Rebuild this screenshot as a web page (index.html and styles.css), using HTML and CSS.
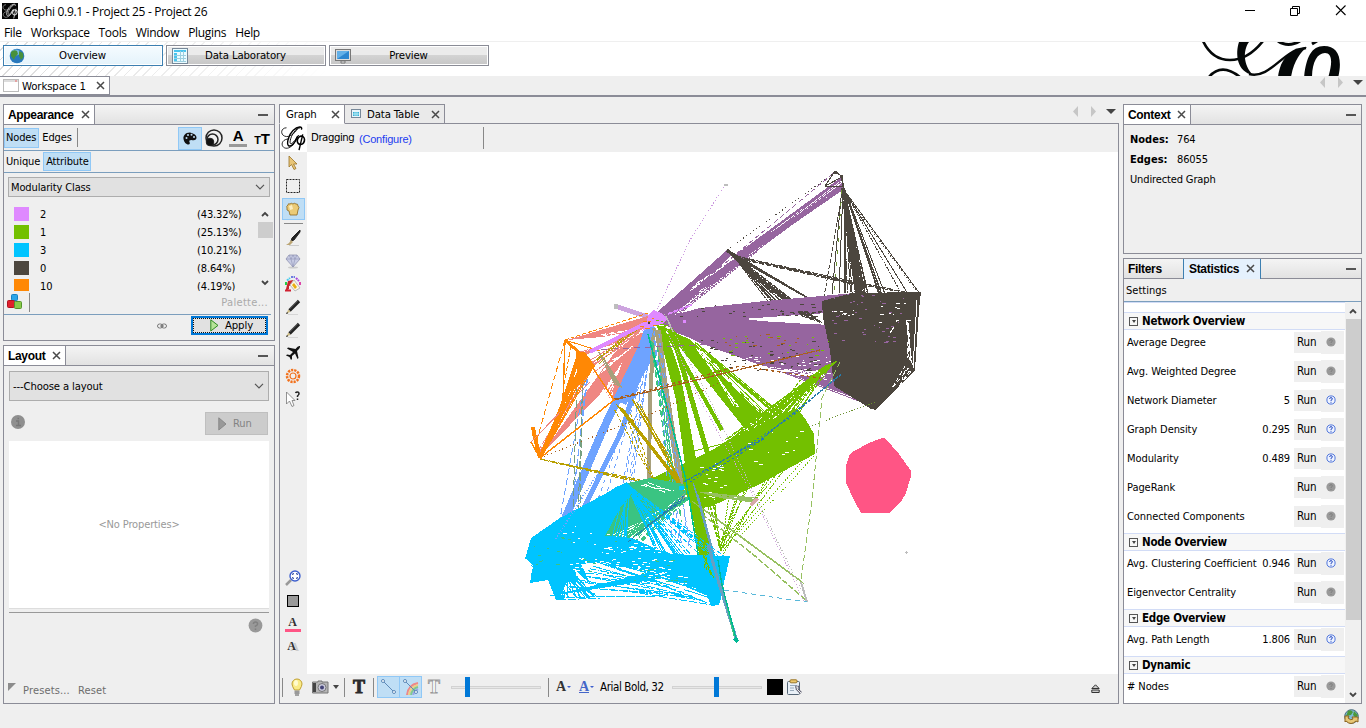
FILE: index.html
```
<!DOCTYPE html>
<html lang="en">
<head>
<meta charset="utf-8">
<title>Gephi 0.9.1 - Project 25 - Project 26</title>
<link rel="stylesheet" href="styles.css">
</head>
<body>
<svg class="defs" width="0" height="0">
  <symbol id="x" viewBox="0 0 9 9"><path d="M1 1L8 8M8 1L1 8" stroke="#4a4a4a" stroke-width="1.5" fill="none"/></symbol>
  <symbol id="chev" viewBox="0 0 10 6"><path d="M1 .8L5 4.8L9 .8" stroke="#555" stroke-width="1.2" fill="none"/></symbol>
  <symbol id="gray-help" viewBox="0 0 10 10"><circle cx="5" cy="5" r="4.6" fill="#999"/><path d="M3.6 4Q3.7 2.6 5 2.6T6.4 4Q6.3 4.8 5 5.4V6M5 7V8" stroke="#808080" fill="none"/></symbol>
  <symbol id="blue-help" viewBox="0 0 10 10"><circle cx="5" cy="5" r="4.1" fill="#eef3ff" stroke="#4f75dc"/><path d="M3.6 4Q3.7 2.6 5 2.6T6.4 4Q6.3 4.8 5 5.2V6M5 6.8V7.8" stroke="#2c50c4" fill="none"/></symbol>
  <symbol id="pencil" viewBox="0 0 16 16"><path d="M3 15.500H13" stroke="#d5d5d5"/><path d="M4.500 11.500L14 2" stroke="#222" stroke-width="3.2"/><path d="M4.500 10L12.500 2" stroke="#777" stroke-width=".8"/><path d="M1.500 14.500L3.2 10.500L5.600 12.800Z" fill="#cdbb83"/><path d="M1 15L2 13L3.200 14.200Z" fill="#111"/></symbol>
  <symbol id="gephi" viewBox="0 0 28 28"><g fill="none" stroke="currentColor"><path d="M7 3C1 3 0 10 5 12S16 9 19 4" stroke-width=".9"/><path d="M23 5C25 1 19 1 14 6S7 20 9 22S16 21 19 12" stroke-width="1.5"/><path d="M22 3C17 3 12 11 11 17S14 20 20 11" stroke-width="1"/><path d="M10 15C3 15 1 20 3 23S10 26 14 21S17 13 20 11" stroke-width=".9"/><ellipse cx="22.500" cy="16.500" rx="3.800" ry="4.500" transform="rotate(15 22.500 16.500)" stroke-width="1.8"/><path d="M24.500 10L20.500 27" stroke-width="1.5"/></g></symbol>
</svg>

<header class="titlebar">
  <svg class="app-icon" viewBox="0 0 28 28"><rect width="28" height="28" fill="#050505"/><use href="#gephi" width="28" height="28" color="#ddd"/></svg>
  <span class="title">Gephi 0.9.1 - Project 25 - Project 26</span>
  <svg class="wincontrols" width="110" height="22" fill="none" stroke="#000"><path d="M5 10.5H15M50.500 8.500H57.500V15.500H50.500ZM52.500 8V6.500H59.500V13.500H58"/><path d="M96 5.500L105.500 15M105.500 5.500L96 15" stroke-width="1.1"/></svg>
</header>
<nav class="menubar"><span>File</span><span>Workspace</span><span>Tools</span><span>Window</span><span>Plugins</span><span>Help</span></nav>

<div class="perspectives">
  <div class="persp on"><svg width="16" height="16"><circle cx="8" cy="8" r="7.300" fill="#2878bd"/><ellipse cx="6.500" cy="4.500" rx="5" ry="3" fill="#78bce2"/><path d="M2 4Q5 1 8 3L9 6L6 9L5 12L2 8ZM10 3L14 5L14.500 9L12 12L10 8Z" fill="#48913c"/></svg><span>Overview</span></div>
  <div class="persp"><svg width="16" height="16"><rect x=".5" y=".5" width="15" height="15" fill="#e9fbff" stroke="#789"/><path d="M2 2H14V4H2ZM2 5H5V14H2Z" fill="#48c4ee"/><path d="M2 7.500H14M2 10.500H14M2 13.500H14M8.500 3V14M11.500 3V14" stroke="#9ccfe0"/></svg><span>Data Laboratory</span></div>
  <div class="persp"><svg width="16" height="16"><rect x=".5" y="1.500" width="15" height="11" fill="#ddd" stroke="#777"/><rect x="2" y="3" width="12" height="8" fill="#2d86d0"/><path d="M2 11L14 3H2Z" fill="#63b0e8"/><path d="M6 13H10V15H6Z" fill="#eee" stroke="#777"/></svg><span>Preview</span></div>
  <svg class="wordmark" viewBox="1195 42 150 34" width="150" height="34" fill="none" stroke="#050808">
    <path d="M1204 41Q1213 60 1231 60T1264 41" stroke-width="2.600"/>
    <path d="M1250 74C1268 79 1281 57 1297 50L1307 48" stroke-width="2.400"/>
    <path d="M1240 42H1250C1244 50 1244 65 1254 75C1238 72 1236 54 1240 42Z" fill="#050808" stroke="none"/>
    <path d="M1308 47C1302 52 1295 60 1292 77H1279C1281 65 1285 50 1308 47Z" fill="#050808" stroke="none"/>
    <path d="M1210 77Q1223 62 1242 78" stroke-width="2.600"/>
    <path d="M1279 41Q1289 48 1301 41M1313 44L1318 41" stroke-width="3"/>
    <path d="M1305 78C1307 58 1312 46 1325 46C1339 46 1344 58 1339 78H1329C1334 62 1333 53 1326 53C1318 53 1313 63 1313 78Z" fill="#050808" stroke="none"/>
  </svg>
</div>

<div class="wstabs">
  <div class="wstab"><svg width="16" height="14"><rect x=".5" y=".5" width="15" height="12" fill="#fff" stroke="#bbb"/><path d="M1 2H15" stroke="#ddd" stroke-width="2"/><path d="M12 2H14" stroke="#e66"/></svg><span>Workspace 1</span><svg class="x" ><use href="#x"/></svg></div>
  <svg class="navarrows" width="46" height="12"><path d="M5 0L0 5.500L5 11ZM18 0L23 5.500L18 11Z" fill="#c6c6c6"/><path d="M33 3H43L38 8Z" fill="#444"/></svg>
</div>

<main class="workspace">
  <div class="col left">
    <section class="panel appearance">
      <div class="phead"><div class="ptab"><b>Appearance</b><svg class="x"><use href="#x"/></svg></div><i class="min"></i></div>
      <div class="arow one">
        <span class="tog on">Nodes</span><span class="tog">Edges</span><i class="vsep"></i>
        <div class="aicons">
          <span class="on"><svg width="14" height="13"><path d="M7 .5C2 .5 0 4 .5 7S3 12.500 5.500 12.500Q7.500 12 6.500 10T8.500 8Q13.500 9 13.500 5.500T7 .5Z" fill="#111"/><g fill="#bfdef5"><circle cx="3.500" cy="6" r="1"/><circle cx="5" cy="3" r="1"/><circle cx="8.500" cy="2.700" r="1"/><circle cx="11" cy="5" r="1"/></g></svg></span>
          <span><svg width="18" height="18" fill="none" stroke="#222"><circle cx="9" cy="9" r="8" stroke-width="1.500"/><circle cx="7.500" cy="10.500" r="5.500" stroke-width="1.500"/><circle cx="5" cy="13" r="3.800" fill="#111"/></svg></span>
          <span class="acolor">A</span>
          <span class="tt"><small>T</small>T</span>
        </div>
      </div>
      <div class="arow two"><span class="tog">Unique</span><span class="tog on">Attribute</span></div>
      <div class="combo mod"><span>Modularity Class</span><svg width="10" height="6"><use href="#chev"/></svg></div>
      <div class="legend">
        <div class="items">
          <div><i class="c2"></i><span>2</span><em>(43.32%)</em></div>
          <div><i class="c1"></i><span>1</span><em>(25.13%)</em></div>
          <div><i class="c3"></i><span>3</span><em>(10.21%)</em></div>
          <div><i class="c0"></i><span>0</span><em>(8.64%)</em></div>
          <div><i class="c10"></i><span>10</span><em>(4.19%)</em></div>
        </div>
        <div class="lscroll"><svg class="up" width="8" height="6"><path d="M1 5L4 2L7 5" stroke="#444" stroke-width="1.800" fill="none"/></svg><i></i><svg width="8" height="6"><path d="M1 1L4 4L7 1" stroke="#444" stroke-width="1.800" fill="none"/></svg></div>
      </div>
      <div class="palette"><svg width="16" height="16"><rect x="4.500" y=".5" width="6" height="6" rx="1" fill="#2ba5e8" stroke="#1980c0"/><rect x=".5" y="6.500" width="7" height="7" rx="1" fill="#e0202c" stroke="#b01020"/><rect x="7.500" y="7.500" width="7" height="7" rx="1" fill="#8acb4a" stroke="#55952c"/></svg><i class="vsep"></i><span>Palette...</span></div>
      <div class="applyrow"><svg width="10" height="6" fill="none" stroke="#777"><rect x=".5" y="1" width="5" height="4" rx="2"/><rect x="4.500" y="1" width="5" height="4" rx="2"/><path d="M3 3H7"/></svg><div class="apply"><svg width="9" height="13"><path d="M.8 .8V12L8 6.400Z" fill="#b5e398" stroke="#2e8b20"/></svg><span>Apply</span></div></div>
    </section>

    <section class="panel layout">
      <div class="phead"><div class="ptab"><b>Layout</b><svg class="x"><use href="#x"/></svg></div><i class="min"></i></div>
      <div class="combo choose"><span>---Choose a layout</span><svg width="10" height="6"><use href="#chev"/></svg></div>
      <div class="runrow"><svg width="14" height="14"><circle cx="7" cy="7" r="7" fill="#8f8f8f"/><path d="M5 6H7.500V10.500M5 10.500H10M6.500 3.500H8" stroke="#777" stroke-width="1.500" fill="none"/></svg><div class="runbtn"><svg width="9" height="14"><path d="M.8 .8V13L8 7Z" fill="#999" stroke="#888"/></svg><span>Run</span></div></div>
      <div class="props"><span>&lt;No Properties&gt;</span></div>
      <div class="prophelp"><svg width="15" height="15"><use href="#gray-help"/></svg></div>
      <div class="presets"><svg width="8" height="8"><path d="M0 0H8L0 8Z" fill="#8c8c8c"/></svg><span>Presets...</span><span>Reset</span></div>
    </section>
  </div>

  <section class="center">
    <div class="ctabs">
      <div class="ctab act"><span>Graph</span><svg class="x"><use href="#x"/></svg></div>
      <div class="ctab"><svg width="10" height="10"><rect x=".5" y=".5" width="9" height="8" fill="#e8f6fb" stroke="#789"/><path d="M2 3H8V7H2Z" fill="#35afd6"/><path d="M2 5H8M4 3V7M6 3V7" stroke="#dff" stroke-width=".7"/></svg><span>Data Table</span><svg class="x"><use href="#x"/></svg></div>
      <div class="rest"><svg width="46" height="12"><path d="M5 0L0 5.500L5 11ZM18 0L23 5.500L18 11Z" fill="#c6c6c6"/><path d="M33 3H43L38 8Z" fill="#444"/></svg></div>
    </div>
    <div class="cbody">
      <div class="ctop"><div class="glogo"><svg width="26" height="26"><use href="#gephi"/></svg></div><span class="drag">Dragging</span><span class="conf">(Configure)</span><i class="vsep"></i></div>
      <div class="cmid">
        <div class="rail">
          <span><svg viewBox="0 0 16 16"><path d="M4 1V12L6.500 9.500L9 14.500L11 13.500L8.500 9H12Z" fill="#e8c578" stroke="#9a7528" stroke-width=".8"/></svg></span>
          <span><svg viewBox="0 0 16 16"><rect x="1.500" y="1.500" width="13" height="13" fill="none" stroke="#222" stroke-dasharray="2 1"/></svg></span>
          <span class="on"><svg viewBox="0 0 16 16"><path d="M2 7Q1 5 3 4Q3 2 5 3Q6 1.500 8 3Q9 1.500 11 3Q13 2.500 13 5Q15 6 13 9L12 14H5L4 10L2 9Z" fill="#ebcb77" stroke="#8e681e" stroke-width=".8"/><path d="M4 5L7 4L8 8L5 9Z" fill="#fbedc4"/></svg></span>
          <i class="hsep"></i>
          <span><svg viewBox="0 0 16 16"><path d="M4 15.500H14" stroke="#ccc"/><path d="M15 0L7 8L6 11L9 10L15 2Z" fill="#222" stroke="#222"/><path d="M6 10L8 12L5 15H1L4 13Z" fill="#bba574"/></svg></span>
          <span><svg viewBox="0 0 16 16"><ellipse cx="8" cy="14.500" rx="5" ry="1" fill="#ccc"/><path d="M4 2H12L15 6L8 14L1 6Z" fill="#c8cce4" stroke="#888baa" stroke-width=".7"/><path d="M1 6H15M4 2L6 6L8 14L10 6L12 2M6 6L8 2L10 6" stroke="#8d91b4" fill="none" stroke-width=".6"/></svg></span>
          <span><svg viewBox="0 0 16 16"><path d="M1 9V6" stroke="#2c4" stroke-width="2"/><path d="M2 4.500L5 2" stroke="#4ce" stroke-width="2" stroke-dasharray="2 .6"/><path d="M6 1H10" stroke="#45d" stroke-width="1.500" stroke-dasharray="2 .6"/><path d="M11 2L14 5" stroke="#a4d" stroke-width="2" stroke-dasharray="2 .6"/><path d="M15 6V9" stroke="#d4a" stroke-width="2"/><path d="M3 5L8 4L7 9L4 10V13L1 15V13Z" fill="#c9232c"/><path d="M9 4L15 12L10 15L5 9Z" fill="#fff5df" stroke="#bbb"/><path d="M9 7L12 11L10 13L7 9Z" fill="#e8ae12"/><path d="M0 14.500H6" stroke="#d02030" stroke-width="2"/></svg></span>
          <span><svg><use href="#pencil"/></svg></span>
          <span><svg><use href="#pencil"/></svg></span>
          <span><svg viewBox="0 0 16 16"><path d="M15 1Q13 .5 10.500 4L3 2.500L2 3.500L8 7L5 10L2 9.500L1 10.500L4.500 12L6 15L7 14L7 11L10 8.500L12.500 14L13.500 13L12 6Q15.500 3 15 1Z" fill="#111"/></svg></span>
          <span><svg viewBox="0 0 16 16"><circle cx="8" cy="8" r="6" fill="none" stroke="#f2711c" stroke-width="2.500" stroke-dasharray="2.200 1"/><circle cx="8" cy="8" r="3" fill="none" stroke="#f2711c" stroke-width="1.200"/></svg></span>
          <span><svg viewBox="0 0 16 16"><path d="M1.500 1V13L4.500 10L7 15.500L9 14.500L7 9.500H10Z" fill="#fff" stroke="#777" stroke-width=".8"/><path d="M10.500 2Q11 1 12.500 1T14 3Q13.500 4 12.500 5V6M12.500 7.500V9" stroke="#222" stroke-width="1.500" fill="none"/></svg></span>
          <div class="railbottom">
            <span><svg viewBox="0 0 16 16"><path d="M1 15L6 10" stroke="#999" stroke-width="2.500"/><circle cx="10" cy="6" r="5" fill="#fff" stroke="#3d5fce" stroke-width="1.400"/><path d="M7.700 5V3.700H9M11 3.700H12.300V5M12.300 7V8.300H11M9 8.300H7.700V7" stroke="#24409c" fill="none"/></svg></span>
            <span><i class="graysq"></i></span>
            <span class="la pinku">A</span>
            <span class="la shadow">A</span>
          </div>
        </div>
        <svg id="graph" class="graph" viewBox="307 152 811 522" width="811" height="522"></svg>
      </div>
      <div class="cbottom">
        <i class="vsep"></i>
        <svg class="bulb" width="12" height="18"><path d="M3.500 12Q1 8 1 6A5 5 0 0 1 11 6Q11 8 8.500 12Z" fill="#faeb88" stroke="#c0a032"/><path d="M3.500 12.500H8.500V16H3.500Z" fill="#999"/><path d="M4 17H8" stroke="#555"/><ellipse cx="5" cy="5" rx="2" ry="3" fill="#fffbd0"/></svg>
        <svg class="cam" width="17" height="14"><path d="M.5 2H6V1H10V2H16V13H.5Z" fill="#b5b5b5" stroke="#777"/><path d="M1 3H4V12H1Z" fill="#444"/><circle cx="10" cy="7.500" r="4" fill="#ccd" stroke="#777"/><circle cx="10" cy="7.500" r="2" fill="#447"/></svg>
        <svg class="dd" width="6" height="4"><path d="M0 0H6L3 4Z" fill="#444"/></svg>
        <i class="vsep s2"></i><span class="bigT">T</span><i class="vsep s3"></i>
        <span class="btn"><svg width="16" height="16"><path d="M2 2L13 13" stroke="#5d89b8"/><circle cx="2" cy="2" r="1.500" fill="#fff" stroke="#5d89b8"/><circle cx="13" cy="13" r="1.500" fill="#fff" stroke="#5d89b8"/></svg></span><span class="btn b2"><svg width="16" height="16" fill="none"><path d="M4 16Q5 6 15 4" stroke="#e88" stroke-width="2"/><path d="M6 16Q7 8 15 6" stroke="#edcf86" stroke-width="2"/><path d="M8 16Q9 10 15 8" stroke="#80c990" stroke-width="2"/><path d="M10 16Q11 12 15 10" stroke="#99a9e8" stroke-width="2"/><path d="M2 2L13 13" stroke="#5d89b8"/><circle cx="2" cy="2" r="1.500" fill="#fff" stroke="#5d89b8"/><circle cx="13" cy="13" r="1.500" fill="#fff" stroke="#5d89b8"/></svg></span>
        <span class="bigT outl">T</span>
        <div class="slider"><i></i></div><i class="vsep s4"></i>
        <span class="la fa">A<i></i></span><span class="la fa blue">A<i></i></span>
        <span class="font">Arial Bold, 32</span><div class="slider sl2"><i></i></div><i class="blacksq"></i>
        <svg class="clip" width="17" height="16"><rect x="1.500" y="2.500" width="12" height="13" rx="1" fill="#e9f0f7" stroke="#567"/><rect x="4" y=".8" width="7" height="3" rx="1" fill="#ecc76a" stroke="#9a7528"/><path d="M4 6.500H11M4 9H8M4 11.500H8" stroke="#9ab"/><path d="M9 8L12 8L11 10L15 14" stroke="#667" stroke-width="2.500" fill="none"/><path d="M9.500 8L12 8L11 10L15 14" stroke="#eee" fill="none"/></svg>
        <svg class="eject" width="9" height="9"><path d="M4.500 .8L8.200 4.500H.8ZM.8 6V8.500H8.200V6Z" fill="#ccc" stroke="#333"/></svg>
      </div>
    </div>
  </section>

  <div class="col right">
    <section class="panel context">
      <div class="phead"><div class="ptab"><b>Context</b><svg class="x"><use href="#x"/></svg></div><i class="min"></i></div>
      <p><b>Nodes:</b><span>764</span></p><p><b>Edges:</b><span>86055</span></p><p>Undirected Graph</p>
    </section>
    <section class="panel stats">
      <div class="phead"><div class="ptab off"><b>Filters</b></div><div class="ptab sel"><b>Statistics</b><svg class="x"><use href="#x"/></svg></div><i class="min"></i></div>
      <div class="settings">Settings</div>
      <div class="sbody">
        <div class="slist">
          <h4><i></i>Network Overview</h4>
          <div class="st"><span>Average Degree</span><em></em><b>Run</b><u><svg><use href="#gray-help"/></svg></u></div>
          <div class="st"><span>Avg. Weighted Degree</span><em></em><b>Run</b><u><svg><use href="#gray-help"/></svg></u></div>
          <div class="st"><span>Network Diameter</span><em>5</em><b>Run</b><u><svg><use href="#blue-help"/></svg></u></div>
          <div class="st"><span>Graph Density</span><em>0.295</em><b>Run</b><u><svg><use href="#blue-help"/></svg></u></div>
          <div class="st"><span>Modularity</span><em>0.489</em><b>Run</b><u><svg><use href="#blue-help"/></svg></u></div>
          <div class="st"><span>PageRank</span><em></em><b>Run</b><u><svg><use href="#gray-help"/></svg></u></div>
          <div class="st"><span>Connected Components</span><em></em><b>Run</b><u><svg><use href="#gray-help"/></svg></u></div>
          <h4><i></i>Node Overview</h4>
          <div class="st"><span>Avg. Clustering Coefficient</span><em>0.946</em><b>Run</b><u><svg><use href="#blue-help"/></svg></u></div>
          <div class="st"><span>Eigenvector Centrality</span><em></em><b>Run</b><u><svg><use href="#gray-help"/></svg></u></div>
          <h4><i></i>Edge Overview</h4>
          <div class="st"><span>Avg. Path Length</span><em>1.806</em><b>Run</b><u><svg><use href="#blue-help"/></svg></u></div>
          <h4><i></i>Dynamic</h4>
          <div class="st"><span># Nodes</span><em></em><b>Run</b><u><svg><use href="#gray-help"/></svg></u></div>
        </div>
        <div class="sscroll"><svg width="8" height="6"><path d="M1 5L4 2L7 5" stroke="#444" stroke-width="1.800" fill="none"/></svg><i></i><svg class="dn" width="8" height="6"><path d="M1 1L4 4L7 1" stroke="#444" stroke-width="1.800" fill="none"/></svg></div>
      </div>
    </section>
  </div>
</main>
<footer class="status"><svg width="16" height="16"><circle cx="7.500" cy="7.500" r="6.800" fill="#7dbbd8" stroke="#467"/><path d="M4 2Q7 0 9 3L7 6L2 7ZM10 2L14 6L12 9L9 6Z" fill="#4b9a3c"/><path d="M1 7H5L4 9Q7 12 9 10L8 8H14L14 13L12 12Q7 17 2 12L1 13Z" fill="#e7c776" stroke="#8c6420"/></svg></footer>
<script src="graph.js"></script>
</body>
</html>
```

FILE: styles.css
```
* { box-sizing: border-box; }
body { margin: 0; width: 1366px; height: 728px; overflow: hidden; background: #efefef; color: #000;
  font: 11px "DejaVu Sans Condensed", "DejaVu Sans", sans-serif; font-stretch: condensed; letter-spacing: -0.13px;
  display: flex; flex-direction: column; white-space: nowrap; }
svg { display: block; flex: none; }
i, em { font-style: normal; }
.defs { position: absolute; }
.x { width: 9px; height: 9px; }
.vsep { width: 1px; background: #888; flex: none; }

.titlebar { height: 22px; background: #fff; display: flex; align-items: center; padding-left: 2px; flex: none; }
.app-icon { width: 16px; height: 16px; }
.title { font: 12px "Open Sans", sans-serif; letter-spacing: -0.3px; margin: 1px 0 0 5px; }
.wincontrols { margin-left: auto; margin-right: 16px; }
.menubar { height: 20px; background: #fff; border-bottom: 1px solid #efefef; display: flex; align-items: center; gap: 9px; padding: 2px 0 0 4px; font: 12px "Open Sans", sans-serif; letter-spacing: -0.32px; flex: none; }
.perspectives { height: 34px; flex: none; background: #fff; display: flex; gap: 3px; padding: 3px 22px 0 3px; position: relative; }
.perspectives::before { content: ""; position: absolute; left: 0; top: 0; width: 330px; height: 34px;
  background: linear-gradient(90deg, transparent, #fff), repeating-linear-gradient(135deg, #fff 0 5.6px, #dcdcdc 5.6px 6.6px); }
.persp { position: relative; width: 160px; height: 21px; border: 1px solid #8a8c96; outline: 1px solid #fff; outline-offset: -2px; background: linear-gradient(#ebebeb 0 45%, #d3d3d3 50%, #c6c6c6); display: flex; align-items: center; padding-left: 5px; font-size: 11.300px; }
.persp.on { border-color: #3c7fb1; background: linear-gradient(#f5fbff, #e4f3fb); }
.persp span { flex: 1; text-align: center; padding: 0 22px 1px 0; }
.wordmark { margin: -3px 0 0 auto; }
.wstabs { height: 21px; flex: none; border-bottom: 2px solid #8b8c97; display: flex; }
.wstab { width: 110px; height: 19px; border: 1px solid #8b8c97; border-left: 0; background: #fff; display: flex; align-items: center; padding-left: 3px; font-size: 11.300px; }
.wstab span { margin-left: 3px; width: 74px; padding-top: 1px; }
.navarrows { margin: 1px 0 0 auto; }

.workspace { display: flex; gap: 4px; padding: 7px 4px 0 3px; height: 607px; flex: none; }
.col { display: flex; flex-direction: column; gap: 4px; }
.left { width: 272px; }
.right { width: 239px; }
.panel { border: 1px solid #8b8c97; display: flex; flex-direction: column; overflow: hidden; }
.phead { height: 20px; flex: none; border-bottom: 1px solid #8b8c97; background: linear-gradient(#f4f4f4, #e2e2e2); display: flex; align-items: center; padding-right: 6px; }
.ptab { height: 19px; background: #fff; border-right: 1px solid #8b8c97; display: flex; align-items: center; gap: 7px; padding: 0 4px; font-size: 12px; }
.ptab b { font: bold 12px "Liberation Sans", Arial, sans-serif; letter-spacing: -0.32px; }
.min { width: 10px; height: 2px; background: #555; margin-left: auto; }
.right .min { margin-right: -1px; }
.appearance { height: 237px; }
.layout { height: 359px; }
.arow { display: flex; border-bottom: 1px solid #7b9ebd; flex: none; align-items: center; }
.one { height: 26px; }
.two { height: 22px; }
.tog { padding: 2px 1px 2px 2px; border: 1px solid transparent; height: 20px; line-height: 14px; }
.tog.on { background: #bfdef5; border-color: #90c8f6; }
.one .tog { margin-top: 1px; }
.one .tog:first-child { padding: 2px 2px 2px 1px; }
.one .vsep { height: 19px; margin-left: 3px; }
.two .tog:first-child { padding-right: 2px; padding-left: 1px; }
.two .tog.on { height: 19px; }
.aicons { display: flex; margin: 1px 0 0 auto; }
.aicons > span { width: 24px; height: 23px; display: flex; align-items: center; justify-content: center; font: bold 15px "Liberation Sans", sans-serif; }
.aicons .on { background: #bfdef5; border: 1px solid #90c8f6; }
.aicons .acolor { height: 19px; width: 18px; margin: 0 3px; border-bottom: 3px solid #999; line-height: 15px; margin-top: 1px; }
.tt small { font-size: 11px; margin-top: 3px; }
.combo { background: #e1e1e1; border: 1px solid #adadad; display: flex; align-items: center; justify-content: space-between; flex: none; }
.mod { margin: 4px 4px 0; height: 20px; padding: 0 4px 0 2px; }
.legend { height: 93px; display: flex; padding-top: 8px; padding-left: 10px; flex: none; }
.items { width: 243px; height: 86px; overflow: hidden; }
.items div { height: 18px; display: flex; align-items: center; }
.items i { width: 15px; height: 14px; }
.items span { width: 157px; margin-left: 11px; }
.c2 { background: #df89ff; } .c1 { background: #73c000; } .c3 { background: #00c4ff; } .c0 { background: #4c463e; } .c10 { background: #ff8805; }
.lscroll { width: 16px; display: flex; flex-direction: column; align-items: center; }
.lscroll .up { margin-top: 6px; }
.lscroll i { width: 15px; height: 16px; background: #cdcdcd; margin: 5px 0 auto; }
.lscroll svg:last-child { margin-bottom: 4px; }
.palette { height: 25px; border-bottom: 1px solid #7b9ebd; margin-right: 3px; display: flex; align-items: center; padding-left: 3px; color: #aaa; flex: none; }
.palette .vsep { height: 19px; margin-left: 6px; }
.palette span { margin-left: auto; padding-right: 3px; letter-spacing: 0.3px; }
.applyrow { display: flex; align-items: center; justify-content: flex-end; gap: 24px; padding: 1px 6px 0 0; }
.apply { width: 77px; height: 19px; border: 2px solid #0078d7; background: #e1e1e1; display: flex; align-items: center; justify-content: center; gap: 6px; font-size: 11.300px; outline: 1px dotted #111; outline-offset: -3px; padding-left: 4px; }
.choose { margin: 5px 5px 0; height: 30px; padding: 0 4px 0 3px; font-size: 11.200px; }
.runrow { display: flex; justify-content: space-between; padding: 11px 6px 0 7px; height: 40px; }
.runrow > svg { margin-top: 3px; }
.runbtn { width: 63px; height: 23px; background: #ccc; border: 1px solid #bfbfbf; color: #838383; display: flex; align-items: center; gap: 6px; padding-left: 12px; }
.props { margin: 0 5px; height: 168px; background: #fff; border-bottom: 1px solid #ddd; display: flex; align-items: center; justify-content: center; color: #999; }
.prophelp { margin: 3px 5px 0; border-top: 1px solid #999; padding: 5px 6px 0; display: flex; justify-content: flex-end; }
.presets { display: flex; align-items: center; margin: auto 4px 6px; color: #6d6d6d; letter-spacing: 0.15px; }
.presets svg { margin: -8px 7px 0 0; }
.presets span { margin-right: 8px; }

.center { width: 840px; display: flex; flex-direction: column; }
.ctabs { display: flex; height: 20px; flex: none; }
.ctab { border: 1px solid #8b8c97; border-left: 0; background: #eaeaea; display: flex; align-items: center; font-size: 11.300px; width: 100px; padding: 0 4px 0 6px; }
.ctab span { margin-left: 6px; }
.ctab .x { margin-left: auto; }
.ctab.act { background: #fff; width: 66px; border-left: 1px solid #8b8c97; border-bottom-color: #fff; padding-left: 0; }
.rest { flex: 1; border-bottom: 1px solid #8b8c97; display: flex; justify-content: flex-end; align-items: center; padding: 0 0 4px; }
.cbody { flex: 1; border: 1px solid #8b8c97; border-top: 0; display: flex; flex-direction: column; }
.ctop { height: 28px; display: flex; align-items: center; flex: none; }
.glogo { width: 27px; height: 28px; background: #fff; padding: 1px 0; }
.drag { font: 11.300px "DejaVu Sans Condensed", "DejaVu Sans", sans-serif; font-stretch: condensed; margin-left: 4px; width: 48px; letter-spacing: -.45px; margin-top: -1px; }
.conf { font: 11px "Liberation Sans", Arial, sans-serif; color: #1c3cf0; letter-spacing: -.2px; width: 124px; margin-top: 1px; }
.ctop .vsep { height: 22px; }
.cmid { display: flex; height: 522px; }
.rail { width: 27px; display: flex; flex-direction: column; align-items: center; padding-right: 1px; }
.rail span { height: 23px; width: 23px; display: flex; align-items: center; justify-content: center; flex: none; }
.rail > span:first-child { height: 22px; }
.rail svg { width: 16px; height: 16px; }
.rail span.on { background: #bfdef5; border: 1px solid #90c8f6; height: 22px; margin-top: 1px; }
.hsep { width: 19px; height: 1px; background: #888; margin: 3px 0 2px; flex: none; }
.railbottom { margin: auto 0 16px; }
.graysq { width: 12px; height: 12px; background: #999; border: 1px solid #000; }
.la { font: bold 12px "Liberation Serif", serif; color: #333; }
.rail .pinku { border-bottom: 3px solid #ff5585; width: 16px; height: 16px; margin: 4px 3px 3px; }
.shadow { text-shadow: 3px 1px #ccc; padding-right: 3px; }
.graph { background: #fff; shape-rendering: crispEdges; }
.cbottom { height: 29px; display: flex; align-items: center; padding: 0 18px 3px 2px; }
.cbottom .vsep { height: 19px; }
.bulb { margin-left: 8px; }
.cam { margin-left: 9px; }
.dd { margin-left: 4px; }
.cbottom .s2 { margin-left: 5px; }
.bigT { font: 900 18px/20px "Liberation Serif", serif; color: #2b2b2b; width: 28px; text-align: center; -webkit-text-stroke: .9px #2b2b2b; letter-spacing: 0; }
.cbottom .s3 { margin-left: 0; margin-right: 3px; }
.btn { width: 23px; height: 22px; border: 1px solid #90c8f6; background: #bfdef5; display: flex; align-items: center; justify-content: center; }
.btn.b2 { border-left: 0; width: 22px; }
.bigT.outl { color: #fff; -webkit-text-stroke: .8px #999; width: 24px; }
.slider { width: 90px; height: 3px; border: 1px solid #d2d2d2; background: #e7e7e7; position: relative; margin-left: 5px; }
.slider i { position: absolute; left: 13px; top: -10px; width: 5px; height: 20px; background: #0078d7; }
.cbottom .s4 { margin: 0 7px 0 7px; }
.fa { font-size: 14px; width: 23px; display: flex; align-items: center; }
.fa i { border: 2px solid transparent; border-top-color: #3d5fce; margin-left: 1px; margin-top: 1px; }
.fa.blue { color: #4466c8; width: 21px; text-decoration: underline; }
.font { width: 72px; font-size: 11.500px; letter-spacing: -.4px; }
.slider.sl2 { margin-left: 0; }
.sl2 i { left: 41px; }
.blacksq { width: 16px; height: 16px; background: #000; margin: 0 3px 0 5px; }
.eject { margin-left: auto; margin-top: 3px; }

.context { height: 150px; }
.context .phead { margin-bottom: 5px; }
.context p { margin: 0; height: 20px; line-height: 19px; padding-left: 6px; }
.context p b { display: inline-block; width: 47px; letter-spacing: 0; }
.stats { height: 446px; }
.off { background: none; width: 59px; border: 0; }
.sel { background: #e5f1fd; border: 1px solid #3c7fb1; border-width: 0 1px; height: 20px; padding: 0 5px; }
.settings { height: 23px; border-bottom: 1px solid #7b9ebd; padding: 5px 2px; flex: none; letter-spacing: 0; }
.sbody { flex: 1; display: flex; min-height: 0; background: #fff; }
.slist { width: 221px; border-top: 1px solid #d2dcf6; padding-top: 9px; overflow: hidden; }
.slist h4 { margin: 0; height: 18px; border: 1px solid #d2dcf6; border-width: 1px 0; background: #f7f7f7; display: flex; align-items: center; font: bold 11.500px "DejaVu Sans Condensed", "DejaVu Sans", sans-serif; font-stretch: condensed; letter-spacing: -.27px; padding-left: 5px; }
.slist h4 i { width: 9px; height: 9px; border: 1px solid #555; margin-right: 4px; display: flex; align-items: center; justify-content: center; }
.slist h4 i::after { content: ""; border: 2.500px solid transparent; border-top: 3px solid #444; border-bottom: 0; }
.st { height: 29px; padding: 0 1px 4px 3px; display: flex; align-items: center; }
.st span { letter-spacing: -0.07px; }
.st em { margin-left: auto; margin-right: 4px; }
.st b { font-weight: normal; background: #efefef; width: 27px; height: 21px; line-height: 21px; padding-left: 3px; font-size: 11.500px; }
.st u { background: #efefef; width: 23px; height: 23px; display: flex; align-items: center; justify-content: center; padding: 0 3px 2px 0; }
.st u svg { width: 10px; height: 10px; }
.sscroll { width: 16px; background: #f0f0f0; display: flex; flex-direction: column; align-items: center; padding-top: 6px; }
.sscroll i { width: 15px; height: 301px; background: #cdcdcd; margin-top: 5px; }
.dn { margin: auto 0 5px; }
.status { height: 24px; display: flex; justify-content: flex-end; padding: 5px 6px 0 0; }
```

FILE: graph.js
```
// Draws the network: filled communities plus bundles of edges between them.
var svg = document.getElementById('graph');
var seed = 7;
function rnd() { seed = (seed * 16807) % 2147483647; return seed / 2147483647; }
function add(tag, attrs) {
  var e = document.createElementNS('http://www.w3.org/2000/svg', tag);
  for (var k in attrs) e.setAttribute(k, attrs[k]);
  svg.appendChild(e);
}
function poly(color, pts) { add('polygon', { points: pts, fill: color }); }
function line(color, pts, w, dash) {
  add('polyline', { points: pts, fill: 'none', stroke: color, 'stroke-width': w || 1, 'stroke-dasharray': dash || 'none' });
}
function on(s) { var t = rnd(); return (s[0] + (s[2] - s[0]) * t).toFixed(1) + ' ' + (s[1] + (s[3] - s[1]) * t).toFixed(1); }
function fan(color, a, b, n, dash, w) {
  var d = '';
  for (var i = 0; i < n; i++) d += 'M' + on(a) + 'L' + on(b);
  add('path', { d: d, stroke: color, 'stroke-width': w || 1, fill: 'none', 'stroke-dasharray': dash || 'none' });
}
function specks(color, x, y, w, h, n) {
  var d = '';
  for (var i = 0; i < n; i++) d += 'M' + Math.round(x + rnd() * w) + ' ' + (Math.round(y + rnd() * h) + .5) + 'h' + (1 + Math.round(rnd() * 3));
  add('path', { d: d, stroke: color, 'stroke-width': 1 });
}
var P = '#96659f', D = '#4c463e', G = '#73c000', C = '#00c4ff', O = '#ff8805', S = '#ef8782',
    B = '#6ea3ff', T = '#a8a07c', M = '#b8a000', E = '#3ac482', V = '#df89ff', N = '#a85f1e', L = '#96c060', K = '#287cac', Y = '#bdbdbd';

// isolated component and node
poly('#ff5585', '882,438 885,438 899,454 911,471 911,476 906,493 901,502 889,513 861,513 854,500 846,483 846,465 850,454 854,451 869,443');
line(Y, '905,552 908,552', 1); line(Y, '906.5,551 906.5,554', 1);

// violet bundles
poly(P, '655,314 727,250 733,254 664,320');
poly(P, '660,320 700,281 739,256 744,262 702,289 668,321');
fan('#fff', [690, 291, 698, 281], [718, 270, 724, 266], 4, '8 2');
line(P, '736,256 841,179', 2.5); line(P, '730,266 843,188', 3); line(P, '738,257 800,216', 5);
fan(P, [700, 278, 705, 290], [840, 180, 844, 188], 7);
fan(P, [664, 318, 672, 321], [735, 262, 760, 250], 6, '2 1');
line(P, '700,284 835,172', 1, '5 3');
poly(P, '655,320 700,308 765,301 855,293 855,311 742,319 828,325 838,350 835,388 760,365 700,343');
fan(P, [670, 328, 675, 332], [834, 386, 862, 403], 9);
fan('#fff', [745, 320, 780, 321], [800, 323, 820, 324], 5);
fan('#fff', [745, 362, 800, 376], [815, 368, 834, 382], 10, '4 3');
specks(D, 680, 311, 150, 6, 20); specks(D, 700, 340, 125, 30, 60);
specks('#fff', 740, 356, 90, 22, 55); specks(N, 720, 332, 100, 20, 14);
line(V, '668,314 692,305', 2, '5 1');
line('#cc99e0', '656,312 690,240 725,185', 1, '1 2'); line(Y, '724,184.5 728,184.5', 2);

// dark community
poly(D, '843,186 847,200 854,235 861,293 855,293 848,245');
fan(D, [843, 186, 845, 190], [845, 293, 868, 293], 18, '14 1');
fan(D, [843, 186, 844, 188], [866, 293, 888, 293], 5);
line(D, '844,190 920,294', 1); line(D, '846,195 917,292', 1, '1 2'); line(D, '843,188 908,294', 1); line(D, '843,188 900,291', 1, '2 1');
line(D, '843,188 823,303', 1, '4 2'); line(D, '842,188 832,294', 1); line(D, '845,190 845,293', 2); line(D, '843,188 839,294', 1);
line('#6b9030', '842,190 834,294', 1, '4 8');
line(D, '825,186 843,186 841,176 835,171 825,186 842,177 844,188', 1); line(D, '834,172 837,172', 3); line(D, '840,176 843,176', 3);
line(D, '727,250 835,172', 1, '1 3');
fan(D, [728, 250, 736, 258], [800, 294, 826, 308], 24, '9 1');
fan(D, [728, 250, 740, 264], [770, 305, 824, 324], 24, '7 1');
fan(D, [735, 255, 742, 262], [850, 284, 915, 294], 6, '5 2');
line(D, '727,250 742,264', 3);
poly(P, '700,308 765,301 855,293 855,306 700,321');
specks(D, 700, 304, 120, 12, 26);
poly(D, '822,301 852,293 921,292 919,310 915,370 876,410 871,409 834,386 830,350 823,318');
specks(P, 832, 294, 75, 50, 45); specks('#fff', 832, 310, 24, 5, 10); specks('#fff', 878, 302, 30, 22, 14);
fan('#fff', [906, 320, 909, 324], [907, 358, 913, 366], 5, '6 2'); fan('#fff', [892, 386, 900, 398], [904, 366, 913, 370], 5, '4 3');
line('#fff', '890,333 894,327', 1); line('#fff', '917,300 913,368', 1);

// green community
poly(G, '657,326 664,326 680,372 700,480 711,560 700,560 690,500 676,400');
poly(G, '662,326 690,340 732,384 764,412 745,428 714,384');
fan(G, [664, 327, 700, 345], [752, 420, 790, 416], 12);
poly('#fff', '690,366 700,378 738,420 724,426 704,394');
line(G, '668,334 722,430', 4); line(G, '670,330 748,428', 6); line(G, '672,332 708,455', 5);
line(G, '670,330 772,424', 4);
fan('#fff', [696, 348, 704, 352], [730, 405, 770, 415], 5, '14 3');
fan(G, [725, 440, 800, 418], [824, 366, 836, 362], 16, '7 1'); fan(G, [745, 436, 790, 415], [800, 380, 826, 370], 12, '5 1'); fan(G, [700, 462, 780, 425], [810, 380, 838, 360], 10, '3 1');
poly(G, '648,480 700,456 762,424 797,408 806,420 814,434 815,454 760,484 712,506 692,510 684,488');
fan(G, [695, 450, 702, 460], [740, 430, 760, 436], 8);
fan(G, [712, 505, 785, 470], [718, 545, 724, 556], 12, '2 1');
fan(G, [705, 505, 725, 505], [718, 540, 722, 556], 5, '5 2');
line(G, '802,462 735,536', 1, '1 2'); line(G, '814,456 742,534', 1, '1 2');
fan(G, [684, 420, 702, 560], [690, 505, 715, 560], 10, '5 3');
fan(L, [690, 500, 712, 515], [800, 580, 804, 584], 9, '12 1'); line(L, '702,514 755,556 807,601', 1.5, '6 2');
line(L, '840,362 822,398 812,500 801,580', 1, '6 3'); line('#6b9030', '875,402 808,427', 1, '1 2');
specks('#fff', 700, 462, 24, 38, 24); specks('#fff', 740, 430, 65, 38, 12);
line('#cfa4da', '663,322 703,405 757,503 804,601', 1, '1 2'); line(Y, '664,314 710,400 757,500 807,601', 1, '1 2');
fan(L, [700, 492, 720, 498], [750, 503, 756, 498], 8); poly('#d7a9a9', '749,504 756,498 759,499 752,506'); line(Y, '801,582 807,602', 2);

// western bundles
line('#cda4df', '615,306 651,318', 5); line(Y, '614,306 618,307', 5);
poly(S, '567,340 648,316 650,328 602,337');
fan('#fff', [600, 334, 606, 337], [636, 327, 642, 331], 4, '5 3');
poly(S, '654,328 640,334 615,352 582,398 540,456 600,394 622,362 613,390 612,401 617,402 650,345');
fan(S, [636, 332, 650, 334], [580, 352, 612, 402], 14, '11 1'); line(S, '640,330 584,354', 3);
fan(S, [538, 448, 542, 458], [590, 360, 605, 365], 4, '5 1');
fan('#fff', [600, 374, 612, 360], [622, 356, 634, 345], 5, '6 4');
line(B, '651,326 640,352 602,432 555,542', 8); line(B, '653,330 622,430 578,520', 5); poly(B, '645,326 654,326 652,360 626,405 615,400 636,355');
fan(B, [640, 390, 652, 340], [585, 500, 635, 490], 7, '4 4');
fan(B, [588, 360, 594, 358], [556, 540, 588, 515], 3, '7 3'); fan('#75a080', [574, 370, 584, 362], [556, 535, 582, 510], 3, '8 3');
line(T, '654,328 650,400 649,482', 4); line(T, '658,330 664,380 683,500', 6); fan(T, [597, 350, 605, 360], [614, 384, 622, 388], 7);
fan(B, [652, 330, 662, 335], [672, 540, 696, 550], 6, '5 5'); fan('#679fc2', [692, 480, 700, 500], [714, 560, 719, 568], 6);
fan(E, [650, 340, 662, 350], [667, 470, 690, 550], 6, '6 4');
line('#00c08c', '648,334 686,480 699,560', 1.5); line(N, '614,400 820,350', 1.3, '12 1'); line(N, '614,399 740,366 820,378', 1.3, '3 3');
line(N, '540,458 660,410 730,378', 1, '1 3'); line(P, '590,350 700,345 780,344', 1, '6 5'); specks(G, 710, 334, 120, 22, 25);
fan(M, [616, 404, 624, 410], [676, 476, 684, 492], 14); fan(M, [630, 398, 640, 404], [672, 460, 682, 486], 5); fan(M, [540, 459, 543, 460], [628, 480, 680, 486], 4, '7 2');
fan(M, [614, 410, 634, 415], [648, 470, 658, 490], 3, '3 2'); fan(M, [595, 358, 600, 365], [630, 330, 645, 325], 4, '2 1');
poly(O, '576,352 585,352 595,366 583,382 564,396 577,372');
line(O, '578,358 560,412 540,458', 4); line(O, '565,340 563,400 540,458', 1.4); line(O, '566,341 588,360', 3); line(O, '533,427 535,438 540,458', 4);
line(O, '565,340 648,313', 1, '4 2'); line(O, '565,340 537,440', 1, '6 3'); line(O, '565,340 600,351', 1); line(O, '540,458 614,400 585,356', 1.5);
line(O, '531,442 540,458', 1.5); line(S, '531,442 590,382', 1); fan(O, [540, 458, 541, 458], [578, 360, 594, 370], 8);
line(O, '571,345 562,397', 1, '5 2'); line(V, '648,322 590,352', 4);
poly(V, '648,315 654,310 661,313 667,319 661,325 654,326 642,331 647,321'); specks(O, 636, 315, 20, 16, 8); specks(G, 654, 318, 12, 10, 7);
line(V, '683,321 686,321', 3); line(D, '648,322.5 650,322.5', 2); line(Y, '666,316 673,332', 1.5);

// cyan community and its teal seam
poly(E, '624,484 650,478 684,484 682,496 640,522 588,546 588,520');
fan('#fff', [640, 486, 650, 482], [662, 494, 676, 490], 3, '6 2');
fan(E, [684, 484, 688, 500], [590, 548, 640, 535], 16);
fan(E, [680, 492, 688, 500], [580, 580, 640, 560], 6, '5 2');
poly(C, '531,538 560,518 618,487 627,482 634,491 620,508 604,538 562,548 533,556 525,559');
poly(C, '532,538 600,535 632,538 668,554 730,556 719,605 711,606 705,590 600,562 581,564 596,596 571,583 563,600 556,600 548,580 530,583 533,566 526,558');
poly('#fff', '575,570 594,587 598,565 640,568 684,590 620,586 600,590 590,594 561,595 567,582 578,582');
fan(C, [626, 485, 632, 490], [655, 550, 715, 590], 12); fan(C, [628, 485, 634, 490], [660, 552, 725, 556], 8, '5 2');
fan(C, [625, 486, 630, 492], [610, 535, 628, 540], 8);
fan(C, [532, 545, 620, 536], [668, 552, 720, 603], 50); fan(C, [556, 598, 600, 560], [655, 580, 712, 605], 14, '9 1');
fan(C, [530, 545, 570, 560], [560, 597, 598, 597], 20); fan(C, [550, 596, 600, 585], [680, 565, 720, 570], 24);
fan(C, [530, 540, 532, 582], [555, 560, 570, 580], 16); fan(C, [532, 538, 545, 550], [615, 488, 627, 483], 22);
fan(C, [548, 560, 555, 580], [557, 594, 562, 600], 12); line(C, '558,600 600,598', 1, '8 2'); line(C, '620,590 712,605', 1, '8 2');
specks('#fff', 570, 558, 135, 20, 110); specks('#fff', 600, 543, 60, 10, 35); specks('#fff', 556, 525, 60, 20, 8); specks(E, 530, 535, 100, 40, 22); specks(E, 630, 560, 60, 25, 20); specks('#fff', 650, 582, 36, 14, 50);
poly(C, '672,564 707,556 729,556 720,603 711,606 706,588 680,572');
line(C, '679,488 684,488', 4); line(B, '600,470 555,540', 2, '1 2');
fan(G, [700, 548, 706, 552], [704, 570, 714, 578], 5, '4 2'); line('#679fc2', '708,545 718,580 736,638', 3); line(E, '720,575 734,636', 1.3); line('#00b894', '718,560 722,585 736,638', 1.3);
line('#58b8da', '724,590 807,602', 1, '5 4');
for (var i = 0; i < 4; i++) line(K, (628 + i * 10) + ',' + (542 - i * 8) + ' 685,' + (495 + i * 1.5), 1, '3 2');
line(K, '684,482 760,440 842,374', 1.3, '3 1'); line(K, '690,482 790,418 838,376', 1, '2 2'); line(K, '715,470 765,438', 1, '3 2');
poly('#00b894', '733,640 735,637 738,638 739,641 736,643');
```
